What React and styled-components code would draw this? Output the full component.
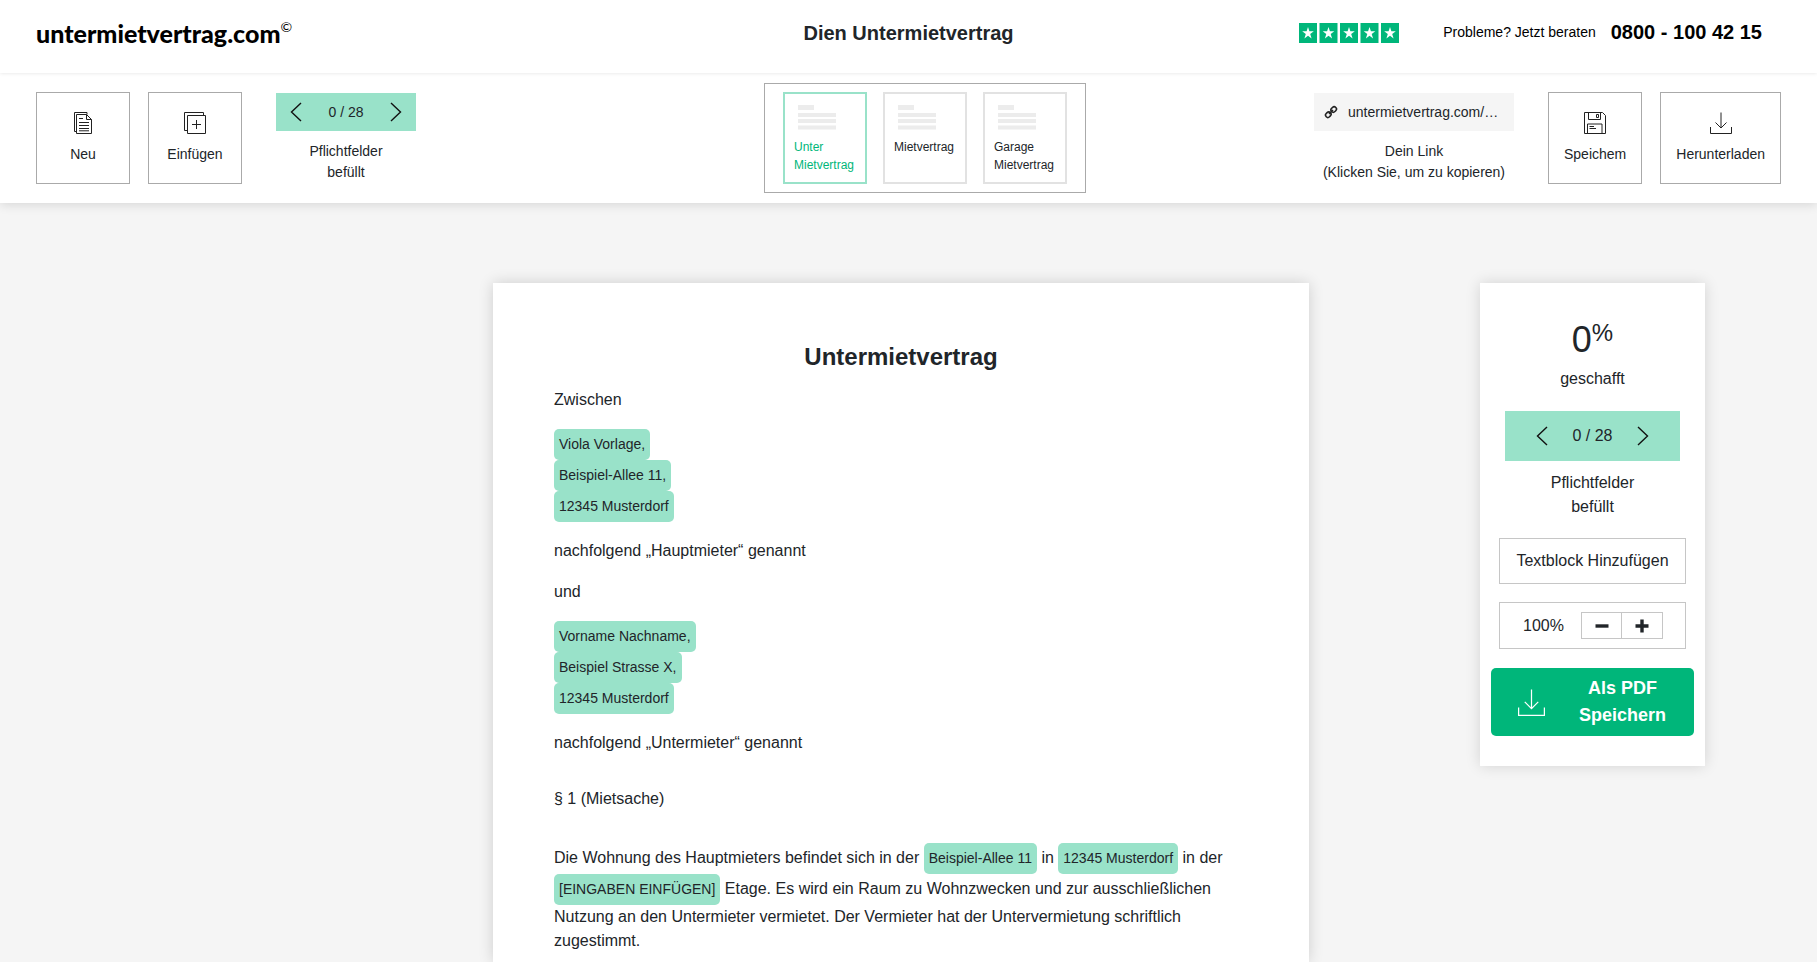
import React from "react";
import styled, { createGlobalStyle, css } from "styled-components";

const GlobalStyle = createGlobalStyle`
  *, *::before, *::after { box-sizing: border-box; }
  body {
    margin: 0;
    background: #f5f5f5;
    color: #212529;
    font: 16px/24px "Liberation Sans", Arial, sans-serif;
  }
  button { font: inherit; color: inherit; cursor: pointer; }
  a { color: inherit; text-decoration: none; }
  h1, h2, p { margin: 0; }
  svg { display: block; flex: none; }
`;

const mint = "#99e2c9";
const green = "#00b67a";

const Header = styled.header`
  position: relative;
  z-index: 2;
  display: grid;
  grid-template-columns: 1fr auto 1fr;
  align-items: center;
  height: 73px;
  padding: 0 36px 7px;
  background: #fff;
  box-shadow: 0 0 4px rgba(0, 0, 0, 0.12);
`;

const Logo = styled.a`
  display: flex;
  align-items: flex-start;
  color: #000;
  font: 900 25px/36px Lato, "Noto Sans", sans-serif;
`;

const LogoMark = styled.span`
  font: 400 14px/24px Lato, "Noto Sans", sans-serif;
`;

const PageTitle = styled.h1`
  font-size: 20px;
  line-height: 30px;
`;

const Contact = styled.div`
  display: flex;
  justify-content: flex-end;
  align-items: center;
  margin-right: 19px;
  color: #000;
  font-size: 14px;
`;

const Rating = styled.a`
  margin-right: 44px;
`;

const Hint = styled.span`
  padding-bottom: 2px;
`;

const Phone = styled.a`
  margin-left: 15px;
  padding-bottom: 2px;
  font-size: 20px;
  font-weight: 700;
`;

const Toolbar = styled.div`
  position: relative;
  z-index: 1;
  display: grid;
  grid-template-columns: 1fr auto 1fr;
  align-items: start;
  height: 130px;
  padding: 0 36px;
  background: #fff;
  box-shadow: 0 2px 10px rgba(0, 0, 0, 0.12);
`;

const Group = styled.div`
  display: flex;
  gap: 18px;
  padding-top: 19px;
  justify-content: ${(p) => (p.$end ? "flex-end" : "flex-start")};
`;

const ToolButton = styled.button`
  display: flex;
  flex-direction: column;
  align-items: center;
  gap: 10px;
  min-width: 94px;
  height: 92px;
  padding: 19px 15px 0;
  border: 1px solid #aaa;
  background: #fff;
  font-size: 14px;
  line-height: 21px;
`;

const Field = styled.div`
  display: flex;
  flex-direction: column;
  align-items: center;
  gap: 10px;
  text-align: center;
  font-size: ${(p) => (p.$large ? 16 : 14)}px;
  line-height: ${(p) => (p.$large ? 24 : 21)}px;
  ${(p) =>
    !p.$large &&
    css`
      padding-top: 1px;
      margin: 0 16px;
    `}
`;

const Stepper = styled.div`
  display: flex;
  align-items: center;
  justify-content: space-between;
  width: ${(p) => (p.$large ? 175 : 140)}px;
  height: ${(p) => (p.$large ? 50 : 38)}px;
  padding: 0 ${(p) => (p.$large ? 31 : 14)}px;
  background: ${mint};
`;

const StepButton = styled.button`
  padding: 0;
  border: 0;
  background: none;
`;

const LinkButton = styled.button`
  display: flex;
  align-items: center;
  gap: 10px;
  width: 200px;
  height: 38px;
  padding: 0 10px;
  border: 0;
  background: #f5f5f5;
`;

const Tabs = styled.div`
  display: flex;
  gap: 16px;
  margin: 10px 0 0 33px;
  padding: 8px 18px;
  border: 1px solid #aaa;
`;

const Tab = styled.button`
  display: flex;
  flex-direction: column;
  width: 84px;
  height: 92px;
  padding: 11px 9px 0;
  border: 2px solid ${(p) => (p.$active ? mint : "#e2e2e2")};
  background: #fff;
  color: ${(p) => (p.$active ? green : "inherit")};
  font-size: 12px;
  line-height: 18px;
  text-align: left;

  svg { margin: 0 0 8px 4px; }
`;

const Workspace = styled.main`
  display: grid;
  grid-template-columns: 1fr 816px 1fr;
  align-items: start;
  padding: 80px 15px 0 0;
`;

const Sheet = styled.article`
  grid-column: 2;
  padding: 56px 61px 9px;
  background: #fff;
  box-shadow: 0 0 14px rgba(0, 0, 0, 0.16);
`;

const SheetTitle = styled.h2`
  margin-bottom: 13px;
  font-size: 24px;
  line-height: 36px;
  text-align: center;
`;

const Parties = styled.section`
  display: flex;
  flex-direction: column;
  gap: 17px;
`;

const Address = styled.div`
  display: flex;
  flex-direction: column;
  align-items: flex-start;
`;

const Clause = styled.p`
  margin-top: 32px;
`;

const Placeholder = styled.button`
  height: 31px;
  padding: 0 5px;
  border: 0;
  border-radius: 5px;
  background: ${mint};
  font-size: 14px;
  line-height: 31px;
`;

const Panel = styled.aside`
  display: flex;
  flex-direction: column;
  align-items: center;
  width: 225px;
  margin-left: 171px;
  padding: 39px 11px 30px;
  background: #fff;
  box-shadow: 0 0 14px rgba(0, 0, 0, 0.14);
`;

const Percent = styled.div`
  display: flex;
  align-items: flex-start;
  font-size: 36px;
  line-height: 36px;
`;

const PercentSign = styled.span`
  font-size: 24px;
  line-height: 22px;
`;

const Done = styled.p`
  margin: 9px 0 20px;
`;

const OutlineButton = styled.button`
  width: 187px;
  height: 46px;
  margin: 19px 0 18px;
  padding: 0;
  border: 1px solid #c6c6c6;
  background: #fff;
`;

const ZoomBox = styled.div`
  display: flex;
  align-items: center;
  justify-content: space-between;
  width: 187px;
  height: 47px;
  padding: 0 22px 0 23px;
  border: 1px solid #c6c6c6;
`;

const ZoomButtons = styled.div`
  display: flex;
`;

const ZoomButton = styled.button`
  display: grid;
  place-items: center;
  width: 41px;
  height: 27px;
  padding: 0;
  border: 1px solid #c6c6c6;
  background: #fff;

  & + & { border-left: 0; }
`;

const PdfButton = styled.button`
  display: flex;
  align-items: center;
  width: 203px;
  height: 68px;
  margin-top: 19px;
  padding: 0 27px;
  border: 0;
  border-radius: 5px;
  background: ${green};
  color: #fff;
  font-size: 18px;
  font-weight: 700;
  line-height: 27px;

  svg { margin-top: 1px; }
  span { flex: 1; margin-left: 33px; padding-bottom: 1px; }
`;

const Chevron = ({ right }) => (
  <svg width="12" height="20" viewBox="0 0 12 20" fill="none" stroke="#111" strokeWidth="1.4" aria-hidden="true">
    <path d={right ? "M1 1l9.5 9L1 19" : "M11 1L1.5 10l9.5 9"} />
  </svg>
);

const CopyIcon = () => (
  <svg width="18" height="22" viewBox="0 0 18 22" fill="none" stroke="#222" aria-hidden="true">
    <path d="M2.500 19.500H.5V.5H13v2" />
    <path d="M2.500 2.500v19h15V7.500L12.500 2.500zM12.500 2.500v5h5" />
    <path d="M5 6.500h4M5 10.500h10M5 13.500h10M5 16.500h10M5 18.800h10" />
  </svg>
);

const InsertIcon = () => (
  <svg width="22" height="22" viewBox="0 0 22 22" fill="none" stroke="#222" aria-hidden="true">
    <path d="M3.500 18.500h-3V.5h19v3" />
    <path d="M3.500 3.500h18v18h-18zM12.500 8v9M8 12.500h9" />
  </svg>
);

const SaveIcon = () => (
  <svg width="22" height="22" viewBox="0 0 22 22" fill="none" stroke="#222" aria-hidden="true">
    <path d="M.5.5h18l3 3v18H.5zM4.500.5v7h12v-7M12.500 2.500h2v3h-2zM3.500 21.500v-9.500h14.500v9.500M5.500 14.500h4.500M5.500 16.500h6.500" />
  </svg>
);

const DownloadIcon = ({ size = 22, color = "#222" }) => (
  <svg width={size} height={size} viewBox="0 0 22 22" fill="none" stroke={color} aria-hidden="true">
    <path d="M11 .5v15.500M5.500 10.500L11 16l5.500-5.500M.5 15v6.500h21V15" />
  </svg>
);

const ChainIcon = () => (
  <svg width="14" height="14" viewBox="0 0 14 14" fill="none" stroke="#222" strokeWidth="1.600" aria-hidden="true">
    <rect x="6.800" y="2.200" width="5.800" height="4.600" rx="2.300" transform="rotate(-45 9.700 4.500)" />
    <rect x="1.400" y="7.400" width="5.800" height="4.600" rx="2.300" transform="rotate(-45 4.300 9.700)" />
    <path d="M5 9l4-4" />
  </svg>
);

const Stars = () => (
  <svg width="100" height="20" viewBox="0 0 100 20" role="img" aria-label="5 von 5 Sternen">
    {[0, 1, 2, 3, 4].map((i) => (
      <g key={i} transform={`translate(${i * 20.5} 0)`}>
        <rect width="18" height="20" fill={green} />
        <path fill="#fff" d="M9 4l1.400 4.300h4.400l-3.600 2.700 1.400 4.500L9 12.800l-3.600 2.700 1.400-4.500-3.600-2.700h4.400z" />
      </g>
    ))}
  </svg>
);

const DocumentPreview = () => (
  <svg width="38" height="25" viewBox="0 0 38 25" fill="#ececec" aria-hidden="true">
    <path d="M0 0h16v5H0zM0 8h38v4H0zM0 14h38v4H0zM0 20.500h38v4H0z" />
  </svg>
);

const Sign = ({ plus }) => (
  <svg width="14" height="14" viewBox="0 0 14 14" fill="none" stroke="#212529" strokeWidth="3.400" aria-hidden="true">
    <path d={plus ? "M.5 7h13M7 .5v13" : "M.5 7h13"} />
  </svg>
);

const RequiredFields = ({ large }) => (
  <Field $large={large}>
    <Stepper $large={large}>
      <StepButton aria-label="Zurück"><Chevron /></StepButton>
      <span>0 / 28</span>
      <StepButton aria-label="Weiter"><Chevron right /></StepButton>
    </Stepper>
    <span>Pflichtfelder<br />befüllt</span>
  </Field>
);

export default function App() {
  return (
    <>
      <GlobalStyle />
      <Header>
        <Logo href="#">untermietvertrag.com<LogoMark>©</LogoMark></Logo>
        <PageTitle>Dien Untermietvertrag</PageTitle>
        <Contact>
          <Rating href="#"><Stars /></Rating>
          <Hint>Probleme? Jetzt beraten</Hint>
          <Phone href="tel:08001004215">0800 - 100 42 15</Phone>
        </Contact>
      </Header>

      <Toolbar>
        <Group>
          <ToolButton><CopyIcon />Neu</ToolButton>
          <ToolButton><InsertIcon />Einfügen</ToolButton>
          <RequiredFields />
        </Group>
        <Tabs>
          <Tab $active><DocumentPreview />Unter Mietvertrag</Tab>
          <Tab><DocumentPreview />Mietvertrag</Tab>
          <Tab><DocumentPreview />Garage Mietvertrag</Tab>
        </Tabs>
        <Group $end>
          <Field>
            <LinkButton><ChainIcon />untermietvertrag.com/…</LinkButton>
            <span>Dein Link<br />(Klicken Sie, um zu kopieren)</span>
          </Field>
          <ToolButton><SaveIcon />Speichem</ToolButton>
          <ToolButton><DownloadIcon />Herunterladen</ToolButton>
        </Group>
      </Toolbar>

      <Workspace>
        <Sheet>
          <SheetTitle>Untermietvertrag</SheetTitle>
          <Parties>
            <p>Zwischen</p>
            <Address>
              <Placeholder>Viola Vorlage,</Placeholder>
              <Placeholder>Beispiel-Allee 11,</Placeholder>
              <Placeholder>12345 Musterdorf</Placeholder>
            </Address>
            <p>nachfolgend „Hauptmieter“ genannt</p>
            <p>und</p>
            <Address>
              <Placeholder>Vorname Nachname,</Placeholder>
              <Placeholder>Beispiel Strasse X,</Placeholder>
              <Placeholder>12345 Musterdorf</Placeholder>
            </Address>
            <p>nachfolgend „Untermieter“ genannt</p>
          </Parties>
          <Clause>§ 1 (Mietsache)</Clause>
          <Clause>
            Die Wohnung des Hauptmieters befindet sich in der <Placeholder>Beispiel-Allee 11</Placeholder> in{" "}
            <Placeholder>12345 Musterdorf</Placeholder> in der <Placeholder>[EINGABEN EINFÜGEN]</Placeholder> Etage. Es
            wird ein Raum zu Wohnzwecken und zur ausschließlichen Nutzung an den Untermieter vermietet. Der Vermieter
            hat der Untervermietung schriftlich zugestimmt.
          </Clause>
        </Sheet>
        <Panel>
          <Percent>0<PercentSign>%</PercentSign></Percent>
          <Done>geschafft</Done>
          <RequiredFields large />
          <OutlineButton>Textblock Hinzufügen</OutlineButton>
          <ZoomBox>
            <span>100%</span>
            <ZoomButtons>
              <ZoomButton aria-label="Verkleinern"><Sign /></ZoomButton>
              <ZoomButton aria-label="Vergrößern"><Sign plus /></ZoomButton>
            </ZoomButtons>
          </ZoomBox>
          <PdfButton><DownloadIcon size={27} color="#fff" /><span>Als PDF Speichern</span></PdfButton>
        </Panel>
      </Workspace>
    </>
  );
}
